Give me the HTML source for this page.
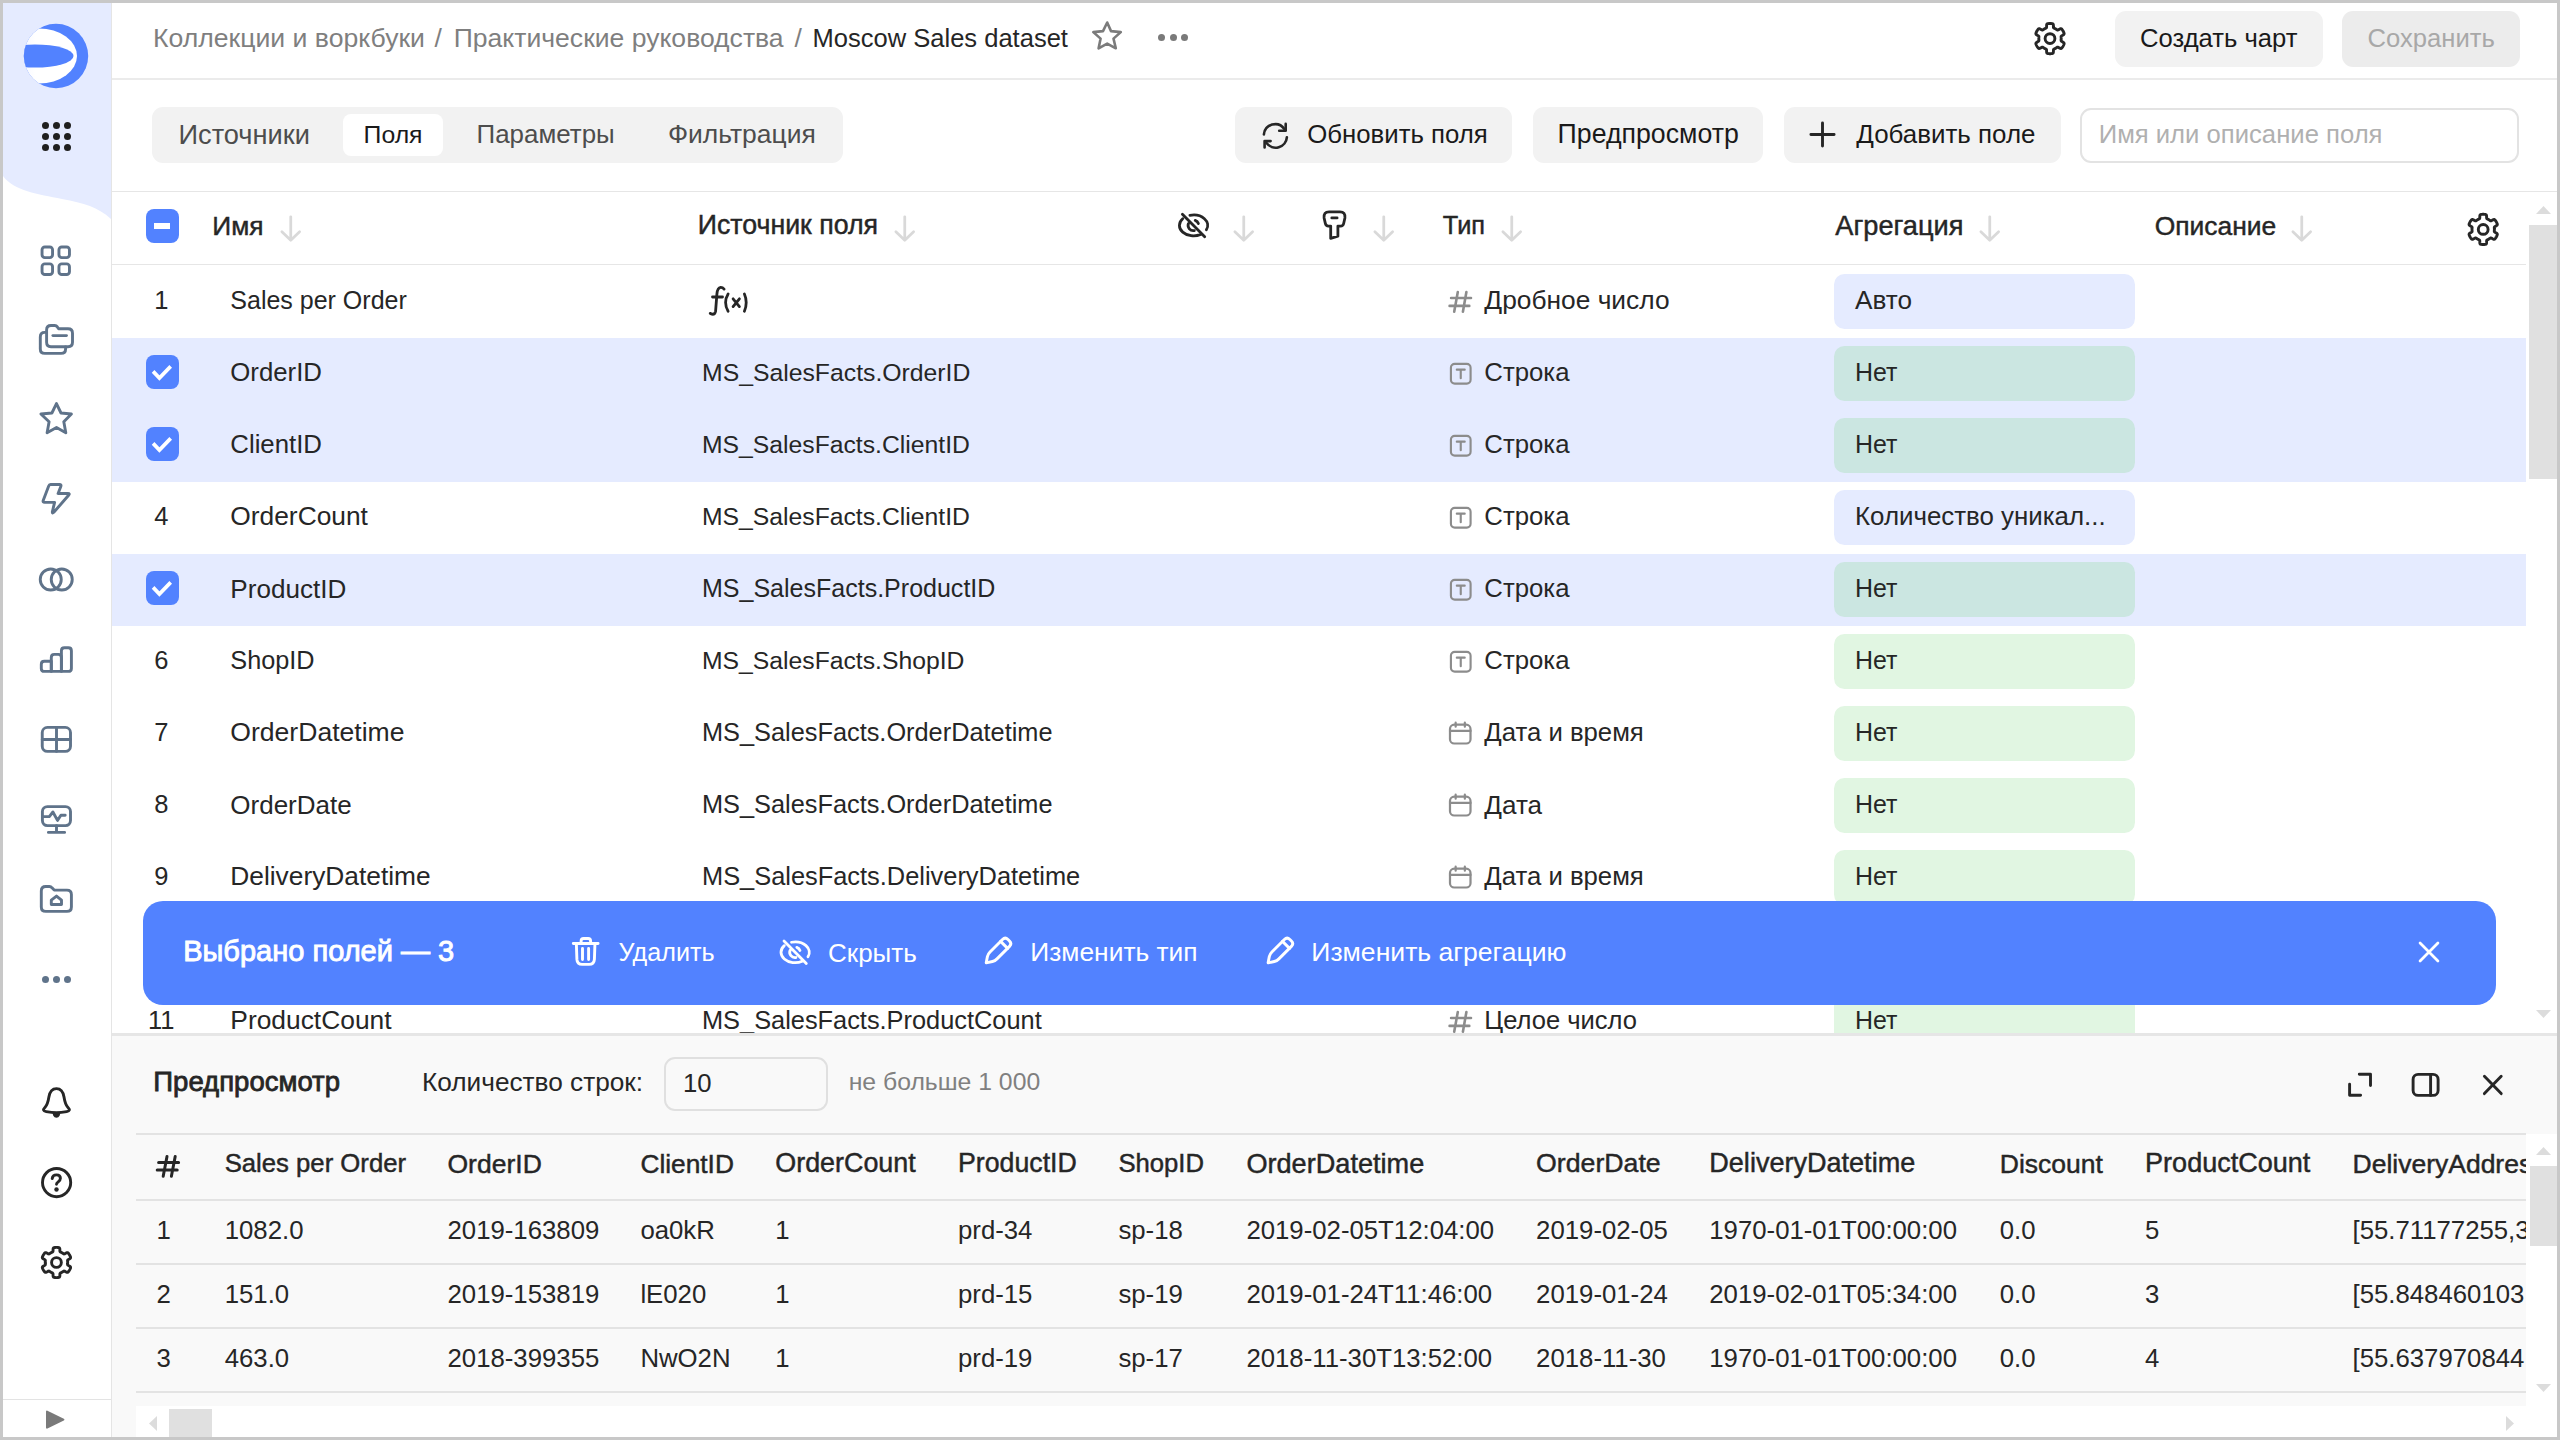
<!DOCTYPE html>
<html><head><meta charset="utf-8"><title>Moscow Sales dataset</title>
<style>
html,body{margin:0;padding:0}
body{width:2560px;height:1440px;position:relative;overflow:hidden;background:#c8c8c8;font-family:"Liberation Sans",sans-serif}
.t{position:absolute;white-space:nowrap;line-height:1;font-family:"Liberation Sans",sans-serif}
.r{position:absolute;box-sizing:border-box}
.s{position:absolute;overflow:visible}
</style></head><body>
<div class="r" style="left:3px;top:3px;width:2554px;height:1434px;background:#fff"></div>

<svg class="s" style="left:0.00px;top:0.00px;width:112.00px;height:230.00px;" viewBox="0 0 112 230"><path d="M3 3H111V219C98 207 84 203 62 199C38 194 14 191 3 176Z" fill="#e5ebff"/></svg>
<div class="r" style="left:110.60px;top:3.00px;width:1.40px;height:1434.00px;background:rgba(0,0,0,0.1);border-radius:0.00px;"></div>
<svg class="s" style="left:0;top:0;width:112px;height:112px" viewBox="0 0 112 112">
<defs>
<clipPath id="lc"><circle cx="56" cy="56" r="32.2"/></clipPath>
<linearGradient id="lg" x1="0" y1="0" x2="1" y2="0">
<stop offset="0" stop-color="#e5ebff"/><stop offset="0.45" stop-color="#ffffff"/><stop offset="1" stop-color="#ffffff"/>
</linearGradient>
</defs>
<g clip-path="url(#lc)">
<rect x="20" y="20" width="72" height="72" fill="#5282ff"/>
<ellipse cx="39" cy="56" rx="38" ry="27.6" fill="url(#lg)"/>
<ellipse cx="35" cy="56" rx="38.5" ry="11.6" fill="#5282ff"/>
</g>
</svg>
<div class="r" style="left:41.60px;top:121.50px;width:7.2px;height:7.2px;border-radius:50%;background:#1f1f1f"></div>
<div class="r" style="left:52.80px;top:121.50px;width:7.2px;height:7.2px;border-radius:50%;background:#1f1f1f"></div>
<div class="r" style="left:64.00px;top:121.50px;width:7.2px;height:7.2px;border-radius:50%;background:#1f1f1f"></div>
<div class="r" style="left:41.60px;top:132.80px;width:7.2px;height:7.2px;border-radius:50%;background:#1f1f1f"></div>
<div class="r" style="left:52.80px;top:132.80px;width:7.2px;height:7.2px;border-radius:50%;background:#1f1f1f"></div>
<div class="r" style="left:64.00px;top:132.80px;width:7.2px;height:7.2px;border-radius:50%;background:#1f1f1f"></div>
<div class="r" style="left:41.60px;top:144.10px;width:7.2px;height:7.2px;border-radius:50%;background:#1f1f1f"></div>
<div class="r" style="left:52.80px;top:144.10px;width:7.2px;height:7.2px;border-radius:50%;background:#1f1f1f"></div>
<div class="r" style="left:64.00px;top:144.10px;width:7.2px;height:7.2px;border-radius:50%;background:#1f1f1f"></div>
<svg class="s" style="left:0;top:0;width:2560px;height:1440px" viewBox="0 0 2560 1440"><rect x="42.05" y="246.95" width="10.5" height="10.7" rx="2.8" fill="none" stroke="#5f738a" stroke-width="2.9" stroke-linecap="round" stroke-linejoin="round"/><rect x="58.95" y="246.95" width="10.5" height="10.7" rx="2.8" fill="none" stroke="#5f738a" stroke-width="2.9" stroke-linecap="round" stroke-linejoin="round"/><rect x="42.05" y="263.85" width="10.5" height="10.7" rx="2.8" fill="none" stroke="#5f738a" stroke-width="2.9" stroke-linecap="round" stroke-linejoin="round"/><rect x="58.95" y="263.85" width="10.5" height="10.7" rx="2.8" fill="none" stroke="#5f738a" stroke-width="2.9" stroke-linecap="round" stroke-linejoin="round"/><path d="M46.6 342.2V330Q46.6 325.5 51 325.5H54.8Q56.4 325.5 57.3 326.9L58.6 328.8H68Q72.5 328.8 72.5 333.3V342.2Q72.5 346.7 68 346.7H51Q46.6 346.7 46.6 342.2Z" fill="none" stroke="#5f738a" stroke-width="2.9" stroke-linecap="round" stroke-linejoin="round"/><path d="M52.9 335.6H66.5" fill="none" stroke="#5f738a" stroke-width="2.9" stroke-linecap="round" stroke-linejoin="round"/><path d="M46.6 332.4H44.8Q40.3 332.4 40.3 336.9V348.9Q40.3 353.4 44.8 353.4H61.1Q65.6 353.4 65.6 348.9V346.9" fill="none" stroke="#5f738a" stroke-width="2.9" stroke-linecap="round" stroke-linejoin="round"/><path d="M56.46 403.6L61 413L71.4 414L63.8 421.7L65.8 432.7L56.5 427.5L47.1 432.7L49.1 421.7L40.9 414L51.9 413Z" fill="none" stroke="#5f738a" stroke-width="2.9" stroke-linecap="round" stroke-linejoin="round"/><path d="M50.5 484.5H59.6Q61.4 484.5 60.9 486.2L58.1 493.5H67.9Q70.3 493.5 68.6 495.3L53.8 512.3Q52 514 52.4 511.6L54.6 502.4H44.6Q42.6 502.4 43.2 500.5L48.6 486.2Q49.2 484.5 50.5 484.5Z" fill="none" stroke="#5f738a" stroke-width="2.9" stroke-linecap="round" stroke-linejoin="round"/><circle cx="50.75" cy="579.5" r="10.5" fill="none" stroke="#5f738a" stroke-width="2.9" stroke-linecap="round" stroke-linejoin="round"/><circle cx="61.75" cy="579.5" r="10.5" fill="none" stroke="#5f738a" stroke-width="2.9" stroke-linecap="round" stroke-linejoin="round"/><path d="M44.3 661.3H51.3V671.4H44.3Q41.3 671.4 41.3 668.4V664.3Q41.3 661.3 44.3 661.3Z" fill="none" stroke="#5f738a" stroke-width="2.9" stroke-linecap="round" stroke-linejoin="round"/><path d="M54.3 654.4H58.4Q61.4 654.4 61.4 657.4V671.4H51.3V657.4Q51.3 654.4 54.3 654.4Z" fill="none" stroke="#5f738a" stroke-width="2.9" stroke-linecap="round" stroke-linejoin="round"/><path d="M64.4 647.7H68.4Q71.4 647.7 71.4 650.7V668.4Q71.4 671.4 68.4 671.4H61.4V650.7Q61.4 647.7 64.4 647.7Z" fill="none" stroke="#5f738a" stroke-width="2.9" stroke-linecap="round" stroke-linejoin="round"/><rect x="42.25" y="727.4" width="28.25" height="24" rx="5.2" fill="none" stroke="#5f738a" stroke-width="2.9" stroke-linecap="round" stroke-linejoin="round"/><path d="M56.5 727.4V751.4M42.25 739.5H70.5" fill="none" stroke="#5f738a" stroke-width="2.9" stroke-linecap="round" stroke-linejoin="round"/><rect x="42.4" y="806.6" width="28.1" height="19" rx="5" fill="none" stroke="#5f738a" stroke-width="2.9" stroke-linecap="round" stroke-linejoin="round"/><path d="M43.2 816.6H49.3L52.9 812L57.5 820.4L60.9 815.3H65.2" fill="none" stroke="#5f738a" stroke-width="2.9" stroke-linecap="round" stroke-linejoin="round"/><path d="M56.5 825.6V832.4M48.4 832.4H64.6" fill="none" stroke="#5f738a" stroke-width="2.9" stroke-linecap="round" stroke-linejoin="round"/><path d="M41.3 907V891Q41.3 886.5 45.8 886.5H49.4Q51 886.5 52 887.8L54.2 890.1H66.9Q71.4 890.1 71.4 894.6V907Q71.4 911.4 66.9 911.4H45.8Q41.3 911.4 41.3 907Z" fill="none" stroke="#5f738a" stroke-width="2.9" stroke-linecap="round" stroke-linejoin="round"/><path d="M56.5 896.1L61.5 900.2V904.5H51.3V900.2Z" fill="none" stroke="#5f738a" stroke-width="2.9" stroke-linecap="round" stroke-linejoin="round"/></svg>
<div class="r" style="left:41.70px;top:975.80px;width:7px;height:7px;border-radius:50%;background:#5f738a"></div>
<div class="r" style="left:52.80px;top:975.80px;width:7px;height:7px;border-radius:50%;background:#5f738a"></div>
<div class="r" style="left:63.90px;top:975.80px;width:7px;height:7px;border-radius:50%;background:#5f738a"></div>
<svg class="s" style="left:0;top:0;width:2560px;height:1440px" viewBox="0 0 2560 1440"><path d="M56.46 1088.6C51.2 1088.6 49.6 1092.6 48.9 1097C48.1 1102 47.6 1104.6 45.1 1107.2C42.6 1109.8 43.2 1111.1 46.2 1111.6C50.1 1112.3 53.1 1112.6 56.46 1112.6C59.8 1112.6 62.8 1112.3 66.7 1111.6C69.7 1111.1 70.3 1109.8 67.8 1107.2C65.3 1104.6 64.8 1102 64 1097C63.3 1092.6 61.7 1088.6 56.46 1088.6Z" fill="none" stroke="#262626" stroke-width="2.9" stroke-linecap="round" stroke-linejoin="round"/><path d="M52.3 1112.6H60.6L59.6 1115.8Q58.6 1117.8 56.46 1117.8Q54.3 1117.8 53.3 1115.8Z" fill="#262626"/><circle cx="56.6" cy="1182.6" r="14.1" fill="none" stroke="#262626" stroke-width="2.9" stroke-linecap="round" stroke-linejoin="round"/><path d="M52.2 1178.6Q52.6 1174.9 56.5 1174.9Q60.4 1174.9 60.4 1178.3Q60.4 1180.5 58.1 1181.9Q56.5 1182.9 56.5 1184.3" fill="none" stroke="#262626" stroke-width="2.9" stroke-linecap="round" stroke-linejoin="round"/><circle cx="56.5" cy="1189.5" r="2.2" fill="#262626"/><path d="M67.66 1262.50 L67.66 1262.70 L67.65 1262.89 L67.65 1263.09 L67.63 1263.28 L67.62 1263.48 L67.60 1263.67 L67.59 1263.87 L67.57 1264.06 L67.56 1264.26 L67.56 1264.46 L67.60 1264.66 L67.71 1264.89 L67.98 1265.16 L68.47 1265.49 L69.16 1265.90 L69.84 1266.34 L70.31 1266.73 L70.53 1267.07 L70.60 1267.37 L70.58 1267.64 L70.53 1267.90 L70.44 1268.15 L70.35 1268.40 L70.25 1268.64 L70.14 1268.88 L70.03 1269.12 L69.91 1269.35 L69.79 1269.59 L69.67 1269.82 L69.54 1270.05 L69.40 1270.28 L69.27 1270.50 L69.12 1270.72 L68.98 1270.94 L68.83 1271.16 L68.67 1271.37 L68.51 1271.58 L68.35 1271.79 L68.17 1271.98 L67.97 1272.16 L67.75 1272.31 L67.46 1272.40 L67.05 1272.38 L66.47 1272.17 L65.76 1271.80 L65.06 1271.40 L64.52 1271.14 L64.16 1271.05 L63.90 1271.06 L63.70 1271.13 L63.53 1271.23 L63.37 1271.34 L63.21 1271.45 L63.05 1271.56 L62.89 1271.68 L62.72 1271.79 L62.56 1271.89 L62.40 1272.00 L62.23 1272.10 L62.06 1272.20 L61.89 1272.30 L61.72 1272.39 L61.54 1272.48 L61.37 1272.57 L61.19 1272.65 L61.02 1272.74 L60.84 1272.82 L60.66 1272.90 L60.49 1272.99 L60.31 1273.09 L60.15 1273.23 L60.01 1273.44 L59.92 1273.80 L59.87 1274.40 L59.86 1275.20 L59.83 1276.01 L59.72 1276.61 L59.54 1276.97 L59.31 1277.18 L59.07 1277.30 L58.82 1277.38 L58.56 1277.44 L58.30 1277.48 L58.04 1277.51 L57.78 1277.54 L57.51 1277.56 L57.25 1277.58 L56.99 1277.59 L56.72 1277.60 L56.46 1277.60 L56.20 1277.60 L55.93 1277.59 L55.67 1277.58 L55.41 1277.56 L55.14 1277.54 L54.88 1277.51 L54.62 1277.48 L54.36 1277.44 L54.10 1277.38 L53.85 1277.30 L53.61 1277.18 L53.38 1276.97 L53.20 1276.61 L53.09 1276.01 L53.06 1275.20 L53.05 1274.40 L53.00 1273.80 L52.91 1273.44 L52.77 1273.23 L52.61 1273.09 L52.43 1272.99 L52.26 1272.90 L52.08 1272.82 L51.90 1272.74 L51.73 1272.65 L51.55 1272.57 L51.38 1272.48 L51.20 1272.39 L51.03 1272.30 L50.86 1272.20 L50.69 1272.10 L50.52 1272.00 L50.36 1271.89 L50.20 1271.79 L50.03 1271.68 L49.87 1271.56 L49.71 1271.45 L49.55 1271.34 L49.39 1271.23 L49.22 1271.13 L49.02 1271.06 L48.76 1271.05 L48.40 1271.14 L47.86 1271.40 L47.16 1271.80 L46.45 1272.17 L45.87 1272.38 L45.46 1272.40 L45.17 1272.31 L44.95 1272.16 L44.75 1271.98 L44.57 1271.79 L44.41 1271.58 L44.25 1271.37 L44.09 1271.16 L43.94 1270.94 L43.80 1270.72 L43.65 1270.50 L43.52 1270.28 L43.38 1270.05 L43.25 1269.82 L43.13 1269.59 L43.01 1269.35 L42.89 1269.12 L42.78 1268.88 L42.67 1268.64 L42.57 1268.40 L42.48 1268.15 L42.39 1267.90 L42.34 1267.64 L42.32 1267.37 L42.39 1267.07 L42.61 1266.73 L43.08 1266.34 L43.76 1265.90 L44.45 1265.49 L44.94 1265.16 L45.21 1264.89 L45.32 1264.66 L45.36 1264.46 L45.36 1264.26 L45.35 1264.06 L45.33 1263.87 L45.32 1263.67 L45.30 1263.48 L45.29 1263.28 L45.27 1263.09 L45.27 1262.89 L45.26 1262.70 L45.26 1262.50 L45.26 1262.30 L45.27 1262.11 L45.27 1261.91 L45.29 1261.72 L45.30 1261.52 L45.32 1261.33 L45.33 1261.13 L45.35 1260.94 L45.36 1260.74 L45.36 1260.54 L45.32 1260.34 L45.21 1260.11 L44.94 1259.84 L44.45 1259.51 L43.76 1259.10 L43.08 1258.66 L42.61 1258.27 L42.39 1257.93 L42.32 1257.63 L42.34 1257.36 L42.39 1257.10 L42.48 1256.85 L42.57 1256.60 L42.67 1256.36 L42.78 1256.12 L42.89 1255.88 L43.01 1255.65 L43.13 1255.41 L43.25 1255.18 L43.38 1254.95 L43.52 1254.72 L43.65 1254.50 L43.80 1254.28 L43.94 1254.06 L44.09 1253.84 L44.25 1253.63 L44.41 1253.42 L44.57 1253.21 L44.75 1253.02 L44.95 1252.84 L45.17 1252.69 L45.46 1252.60 L45.87 1252.62 L46.45 1252.83 L47.16 1253.20 L47.86 1253.60 L48.40 1253.86 L48.76 1253.95 L49.02 1253.94 L49.22 1253.87 L49.39 1253.77 L49.55 1253.66 L49.71 1253.55 L49.87 1253.44 L50.03 1253.32 L50.20 1253.21 L50.36 1253.11 L50.52 1253.00 L50.69 1252.90 L50.86 1252.80 L51.03 1252.70 L51.20 1252.61 L51.38 1252.52 L51.55 1252.43 L51.73 1252.35 L51.90 1252.26 L52.08 1252.18 L52.26 1252.10 L52.43 1252.01 L52.61 1251.91 L52.77 1251.77 L52.91 1251.56 L53.00 1251.20 L53.05 1250.60 L53.06 1249.80 L53.09 1248.99 L53.20 1248.39 L53.38 1248.03 L53.61 1247.82 L53.85 1247.70 L54.10 1247.62 L54.36 1247.56 L54.62 1247.52 L54.88 1247.49 L55.14 1247.46 L55.41 1247.44 L55.67 1247.42 L55.93 1247.41 L56.20 1247.40 L56.46 1247.40 L56.72 1247.40 L56.99 1247.41 L57.25 1247.42 L57.51 1247.44 L57.78 1247.46 L58.04 1247.49 L58.30 1247.52 L58.56 1247.56 L58.82 1247.62 L59.07 1247.70 L59.31 1247.82 L59.54 1248.03 L59.72 1248.39 L59.83 1248.99 L59.86 1249.80 L59.87 1250.60 L59.92 1251.20 L60.01 1251.56 L60.15 1251.77 L60.31 1251.91 L60.49 1252.01 L60.66 1252.10 L60.84 1252.18 L61.02 1252.26 L61.19 1252.35 L61.37 1252.43 L61.54 1252.52 L61.72 1252.61 L61.89 1252.70 L62.06 1252.80 L62.23 1252.90 L62.40 1253.00 L62.56 1253.11 L62.72 1253.21 L62.89 1253.32 L63.05 1253.44 L63.21 1253.55 L63.37 1253.66 L63.53 1253.77 L63.70 1253.87 L63.90 1253.94 L64.16 1253.95 L64.52 1253.86 L65.06 1253.60 L65.76 1253.20 L66.47 1252.83 L67.05 1252.62 L67.46 1252.60 L67.75 1252.69 L67.97 1252.84 L68.17 1253.02 L68.35 1253.21 L68.51 1253.42 L68.67 1253.63 L68.83 1253.84 L68.98 1254.06 L69.12 1254.28 L69.27 1254.50 L69.40 1254.72 L69.54 1254.95 L69.67 1255.18 L69.79 1255.41 L69.91 1255.65 L70.03 1255.88 L70.14 1256.12 L70.25 1256.36 L70.35 1256.60 L70.44 1256.85 L70.53 1257.10 L70.58 1257.36 L70.60 1257.63 L70.53 1257.93 L70.31 1258.27 L69.84 1258.66 L69.16 1259.10 L68.47 1259.51 L67.98 1259.84 L67.71 1260.11 L67.60 1260.34 L67.56 1260.54 L67.56 1260.74 L67.57 1260.94 L67.59 1261.13 L67.60 1261.33 L67.62 1261.52 L67.63 1261.72 L67.65 1261.91 L67.65 1262.11 L67.66 1262.30Z" fill="none" stroke="#262626" stroke-width="2.90" stroke-linejoin="round"/><circle cx="56.46" cy="1262.50" r="4.90" fill="none" stroke="#262626" stroke-width="2.90"/></svg>
<div class="r" style="left:3.00px;top:1398.60px;width:107.60px;height:1.40px;background:#e3e3e3;border-radius:0.00px;"></div>
<svg class="s" style="left:0;top:0;width:2560px;height:1440px" viewBox="0 0 2560 1440"><path d="M47 1411.6L63.4 1419.6L47 1427.6Z" fill="#7a7a7a" stroke="#7a7a7a" stroke-width="2" stroke-linejoin="round"/></svg>
<div class="r" style="left:112.00px;top:78.00px;width:2445.00px;height:2.00px;background:#ebebeb;border-radius:0.00px;"></div>
<div class="t" style="left:153.00px;top:24.66px;font-size:26.61px;color:#7f7f7f">Коллекции и воркбуки</div>
<div class="t" style="left:434.50px;top:24.76px;font-size:26.50px;color:#7f7f7f">/</div>
<div class="t" style="left:453.75px;top:24.72px;font-size:26.55px;color:#7f7f7f">Практические руководства</div>
<div class="t" style="left:794.50px;top:24.76px;font-size:26.50px;color:#7f7f7f">/</div>
<div class="t" style="left:812.50px;top:25.58px;font-size:25.54px;color:#262626">Moscow Sales dataset</div>
<svg class="s" style="left:0;top:0;width:2560px;height:1440px" viewBox="0 0 2560 1440"><path d="M1107.2 22.5L1111 31.1L1120.8 32.1L1113.5 38.6L1115.8 48.3L1107.2 43.6L1098.6 48.3L1100.6 38.6L1093.3 32.1L1103 31.1Z" fill="none" stroke="#7b7b7b" stroke-width="2.6" stroke-linejoin="round"/></svg>
<div class="r" style="left:1158.00px;top:33.50px;width:7px;height:7px;border-radius:50%;background:#7a7a7a"></div>
<div class="r" style="left:1169.50px;top:33.50px;width:7px;height:7px;border-radius:50%;background:#7a7a7a"></div>
<div class="r" style="left:1181.00px;top:33.50px;width:7px;height:7px;border-radius:50%;background:#7a7a7a"></div>
<svg class="s" style="left:0;top:0;width:2560px;height:1440px" viewBox="0 0 2560 1440"><path d="M2061.20 38.60 L2061.20 38.80 L2061.19 38.99 L2061.19 39.19 L2061.17 39.38 L2061.16 39.58 L2061.14 39.77 L2061.13 39.97 L2061.11 40.16 L2061.10 40.36 L2061.10 40.56 L2061.14 40.76 L2061.25 40.99 L2061.52 41.26 L2062.01 41.59 L2062.70 42.00 L2063.38 42.44 L2063.85 42.83 L2064.07 43.17 L2064.14 43.47 L2064.12 43.74 L2064.07 44.00 L2063.98 44.25 L2063.89 44.50 L2063.79 44.74 L2063.68 44.98 L2063.57 45.22 L2063.45 45.45 L2063.33 45.69 L2063.21 45.92 L2063.08 46.15 L2062.94 46.38 L2062.81 46.60 L2062.66 46.82 L2062.52 47.04 L2062.37 47.26 L2062.21 47.47 L2062.05 47.68 L2061.89 47.89 L2061.71 48.08 L2061.51 48.26 L2061.29 48.41 L2061.00 48.50 L2060.59 48.48 L2060.01 48.27 L2059.30 47.90 L2058.60 47.50 L2058.06 47.24 L2057.70 47.15 L2057.44 47.16 L2057.24 47.23 L2057.07 47.33 L2056.91 47.44 L2056.75 47.55 L2056.59 47.66 L2056.43 47.78 L2056.26 47.89 L2056.10 47.99 L2055.94 48.10 L2055.77 48.20 L2055.60 48.30 L2055.43 48.40 L2055.26 48.49 L2055.08 48.58 L2054.91 48.67 L2054.73 48.75 L2054.56 48.84 L2054.38 48.92 L2054.20 49.00 L2054.03 49.09 L2053.85 49.19 L2053.69 49.33 L2053.55 49.54 L2053.46 49.90 L2053.41 50.50 L2053.40 51.30 L2053.37 52.11 L2053.26 52.71 L2053.08 53.07 L2052.85 53.28 L2052.61 53.40 L2052.36 53.48 L2052.10 53.54 L2051.84 53.58 L2051.58 53.61 L2051.32 53.64 L2051.05 53.66 L2050.79 53.68 L2050.53 53.69 L2050.26 53.70 L2050.00 53.70 L2049.74 53.70 L2049.47 53.69 L2049.21 53.68 L2048.95 53.66 L2048.68 53.64 L2048.42 53.61 L2048.16 53.58 L2047.90 53.54 L2047.64 53.48 L2047.39 53.40 L2047.15 53.28 L2046.92 53.07 L2046.74 52.71 L2046.63 52.11 L2046.60 51.30 L2046.59 50.50 L2046.54 49.90 L2046.45 49.54 L2046.31 49.33 L2046.15 49.19 L2045.97 49.09 L2045.80 49.00 L2045.62 48.92 L2045.44 48.84 L2045.27 48.75 L2045.09 48.67 L2044.92 48.58 L2044.74 48.49 L2044.57 48.40 L2044.40 48.30 L2044.23 48.20 L2044.06 48.10 L2043.90 47.99 L2043.74 47.89 L2043.57 47.78 L2043.41 47.66 L2043.25 47.55 L2043.09 47.44 L2042.93 47.33 L2042.76 47.23 L2042.56 47.16 L2042.30 47.15 L2041.94 47.24 L2041.40 47.50 L2040.70 47.90 L2039.99 48.27 L2039.41 48.48 L2039.00 48.50 L2038.71 48.41 L2038.49 48.26 L2038.29 48.08 L2038.11 47.89 L2037.95 47.68 L2037.79 47.47 L2037.63 47.26 L2037.48 47.04 L2037.34 46.82 L2037.19 46.60 L2037.06 46.38 L2036.92 46.15 L2036.79 45.92 L2036.67 45.69 L2036.55 45.45 L2036.43 45.22 L2036.32 44.98 L2036.21 44.74 L2036.11 44.50 L2036.02 44.25 L2035.93 44.00 L2035.88 43.74 L2035.86 43.47 L2035.93 43.17 L2036.15 42.83 L2036.62 42.44 L2037.30 42.00 L2037.99 41.59 L2038.48 41.26 L2038.75 40.99 L2038.86 40.76 L2038.90 40.56 L2038.90 40.36 L2038.89 40.16 L2038.87 39.97 L2038.86 39.77 L2038.84 39.58 L2038.83 39.38 L2038.81 39.19 L2038.81 38.99 L2038.80 38.80 L2038.80 38.60 L2038.80 38.40 L2038.81 38.21 L2038.81 38.01 L2038.83 37.82 L2038.84 37.62 L2038.86 37.43 L2038.87 37.23 L2038.89 37.04 L2038.90 36.84 L2038.90 36.64 L2038.86 36.44 L2038.75 36.21 L2038.48 35.94 L2037.99 35.61 L2037.30 35.20 L2036.62 34.76 L2036.15 34.37 L2035.93 34.03 L2035.86 33.73 L2035.88 33.46 L2035.93 33.20 L2036.02 32.95 L2036.11 32.70 L2036.21 32.46 L2036.32 32.22 L2036.43 31.98 L2036.55 31.75 L2036.67 31.51 L2036.79 31.28 L2036.92 31.05 L2037.06 30.82 L2037.19 30.60 L2037.34 30.38 L2037.48 30.16 L2037.63 29.94 L2037.79 29.73 L2037.95 29.52 L2038.11 29.31 L2038.29 29.12 L2038.49 28.94 L2038.71 28.79 L2039.00 28.70 L2039.41 28.72 L2039.99 28.93 L2040.70 29.30 L2041.40 29.70 L2041.94 29.96 L2042.30 30.05 L2042.56 30.04 L2042.76 29.97 L2042.93 29.87 L2043.09 29.76 L2043.25 29.65 L2043.41 29.54 L2043.57 29.42 L2043.74 29.31 L2043.90 29.21 L2044.06 29.10 L2044.23 29.00 L2044.40 28.90 L2044.57 28.80 L2044.74 28.71 L2044.92 28.62 L2045.09 28.53 L2045.27 28.45 L2045.44 28.36 L2045.62 28.28 L2045.80 28.20 L2045.97 28.11 L2046.15 28.01 L2046.31 27.87 L2046.45 27.66 L2046.54 27.30 L2046.59 26.70 L2046.60 25.90 L2046.63 25.09 L2046.74 24.49 L2046.92 24.13 L2047.15 23.92 L2047.39 23.80 L2047.64 23.72 L2047.90 23.66 L2048.16 23.62 L2048.42 23.59 L2048.68 23.56 L2048.95 23.54 L2049.21 23.52 L2049.47 23.51 L2049.74 23.50 L2050.00 23.50 L2050.26 23.50 L2050.53 23.51 L2050.79 23.52 L2051.05 23.54 L2051.32 23.56 L2051.58 23.59 L2051.84 23.62 L2052.10 23.66 L2052.36 23.72 L2052.61 23.80 L2052.85 23.92 L2053.08 24.13 L2053.26 24.49 L2053.37 25.09 L2053.40 25.90 L2053.41 26.70 L2053.46 27.30 L2053.55 27.66 L2053.69 27.87 L2053.85 28.01 L2054.03 28.11 L2054.20 28.20 L2054.38 28.28 L2054.56 28.36 L2054.73 28.45 L2054.91 28.53 L2055.08 28.62 L2055.26 28.71 L2055.43 28.80 L2055.60 28.90 L2055.77 29.00 L2055.94 29.10 L2056.10 29.21 L2056.26 29.31 L2056.43 29.42 L2056.59 29.54 L2056.75 29.65 L2056.91 29.76 L2057.07 29.87 L2057.24 29.97 L2057.44 30.04 L2057.70 30.05 L2058.06 29.96 L2058.60 29.70 L2059.30 29.30 L2060.01 28.93 L2060.59 28.72 L2061.00 28.70 L2061.29 28.79 L2061.51 28.94 L2061.71 29.12 L2061.89 29.31 L2062.05 29.52 L2062.21 29.73 L2062.37 29.94 L2062.52 30.16 L2062.66 30.38 L2062.81 30.60 L2062.94 30.82 L2063.08 31.05 L2063.21 31.28 L2063.33 31.51 L2063.45 31.75 L2063.57 31.98 L2063.68 32.22 L2063.79 32.46 L2063.89 32.70 L2063.98 32.95 L2064.07 33.20 L2064.12 33.46 L2064.14 33.73 L2064.07 34.03 L2063.85 34.37 L2063.38 34.76 L2062.70 35.20 L2062.01 35.61 L2061.52 35.94 L2061.25 36.21 L2061.14 36.44 L2061.10 36.64 L2061.10 36.84 L2061.11 37.04 L2061.13 37.23 L2061.14 37.43 L2061.16 37.62 L2061.17 37.82 L2061.19 38.01 L2061.19 38.21 L2061.20 38.40Z" fill="none" stroke="#262626" stroke-width="2.90" stroke-linejoin="round"/><circle cx="2050.00" cy="38.60" r="4.90" fill="none" stroke="#262626" stroke-width="2.90"/></svg>
<div class="r" style="left:2115.30px;top:10.90px;width:207.70px;height:55.80px;background:#f2f2f2;border-radius:11.00px;"></div>
<div class="t" style="left:2140.00px;top:26.41px;font-size:25.61px;color:#1a1a1a">Создать чарт</div>
<div class="r" style="left:2342.40px;top:10.90px;width:177.20px;height:55.80px;background:#ececec;border-radius:11.00px;"></div>
<div class="t" style="left:2367.50px;top:26.39px;font-size:25.63px;color:#a8a8a8">Сохранить</div>
<div class="r" style="left:151.80px;top:107.00px;width:691.20px;height:56.00px;background:#f2f2f2;border-radius:11.00px;"></div>
<div class="r" style="left:342.50px;top:113.80px;width:100.70px;height:42.50px;background:#ffffff;border-radius:8.00px;"></div>
<div class="t" style="left:178.50px;top:120.75px;font-size:27.23px;color:#4d4d4d">Источники</div>
<div class="t" style="left:363.60px;top:122.81px;font-size:24.79px;color:#1a1a1a">Поля</div>
<div class="t" style="left:476.60px;top:121.86px;font-size:25.91px;color:#4d4d4d">Параметры</div>
<div class="t" style="left:668.00px;top:121.41px;font-size:26.44px;color:#4d4d4d">Фильтрация</div>
<div class="r" style="left:1235.20px;top:107.00px;width:276.60px;height:56.00px;background:#f2f2f2;border-radius:11.00px;"></div>
<svg class="s" style="left:0;top:0;width:2560px;height:1440px" viewBox="0 0 2560 1440"><g fill="none" stroke="#262626" stroke-width="2.6" stroke-linecap="round" stroke-linejoin="round"><path d="M1263.9 134.4A11.3 11.3 0 0 1 1284.3 128.9"/><path d="M1285.7 123.9V130.7H1279.2"/><path d="M1286.9 137.2A11.3 11.3 0 0 1 1266.5 143.1"/><path d="M1264.6 147.5V141.1H1270.6"/></g></svg>
<div class="t" style="left:1307.20px;top:121.97px;font-size:25.78px;color:#1a1a1a">Обновить поля</div>
<div class="r" style="left:1532.60px;top:107.00px;width:230.70px;height:56.00px;background:#f2f2f2;border-radius:11.00px;"></div>
<div class="t" style="left:1557.60px;top:121.17px;font-size:26.73px;color:#1a1a1a">Предпросмотр</div>
<div class="r" style="left:1784.00px;top:107.00px;width:276.50px;height:56.00px;background:#f2f2f2;border-radius:11.00px;"></div>
<svg class="s" style="left:1808.10px;top:120.30px;width:29.00px;height:29.00px;" viewBox="0 0 16 16"><path d="M8 1.6v12.8M1.6 8h12.8" fill="none" stroke="#262626" stroke-width="1.6" stroke-linecap="round"/></svg>
<div class="t" style="left:1856.30px;top:121.84px;font-size:25.93px;color:#1a1a1a">Добавить поле</div>
<div class="r" style="left:2080.40px;top:107.60px;width:439.10px;height:55.10px;background:#ffffff;border-radius:11.00px;border:2px solid #e3e3e3"></div>
<div class="t" style="left:2098.70px;top:122.06px;font-size:25.67px;color:#b0b0b0">Имя или описание поля</div>
<div class="r" style="left:112.00px;top:190.50px;width:2445.00px;height:1.80px;background:#e6e6e6;border-radius:0.00px;"></div>
<div class="r" style="left:112.00px;top:263.80px;width:2414.00px;height:1.70px;background:#e6e6e6;border-radius:0.00px;"></div>
<div class="r" style="left:145.60px;top:209.40px;width:33.40px;height:33.60px;background:#5282ff;border-radius:8.00px;"></div>
<div class="r" style="left:154.10px;top:223.30px;width:16.30px;height:5.70px;background:#fff;border-radius:0.00px;"></div>
<div class="t" style="left:212.30px;top:212.62px;font-size:26.31px;color:#262626;-webkit-text-stroke:0.45px #262626">Имя</div>
<svg class="s" style="left:276.05px;top:213.95px;width:29.50px;height:29.50px;" viewBox="0 0 16 16"><path d="M8 1.5v12.5M3.2 9.6L8 14.2l4.8-4.6" fill="none" stroke="#d9d9d9" stroke-width="1.5" stroke-linecap="round" stroke-linejoin="round"/></svg>
<div class="t" style="left:697.70px;top:212.26px;font-size:26.74px;color:#262626;-webkit-text-stroke:0.45px #262626">Источник поля</div>
<svg class="s" style="left:890.25px;top:213.95px;width:29.50px;height:29.50px;" viewBox="0 0 16 16"><path d="M8 1.5v12.5M3.2 9.6L8 14.2l4.8-4.6" fill="none" stroke="#d9d9d9" stroke-width="1.5" stroke-linecap="round" stroke-linejoin="round"/></svg>
<svg class="s" style="left:0;top:0;width:2560px;height:1440px" viewBox="0 0 2560 1440"><path d="M1182.71 218.72A14.15 10.40 0 0 0 1200.62 234.41M1189.89 215.35A14.15 10.40 0 0 1 1206.37 229.80M1188.42 223.59A5.30 5.30 0 0 0 1194.32 230.62M1195.21 220.42A5.30 5.30 0 0 1 1198.38 223.59M1182.40 214.20L1204.70 236.70" fill="none" stroke="#262626" stroke-width="2.80" stroke-linecap="round"/></svg>
<svg class="s" style="left:1228.55px;top:213.95px;width:29.50px;height:29.50px;" viewBox="0 0 16 16"><path d="M8 1.5v12.5M3.2 9.6L8 14.2l4.8-4.6" fill="none" stroke="#d9d9d9" stroke-width="1.5" stroke-linecap="round" stroke-linejoin="round"/></svg>
<svg class="s" style="left:0;top:0;width:2560px;height:1440px" viewBox="0 0 2560 1440"><g fill="none" stroke="#262626" stroke-width="2.8" stroke-linecap="round" stroke-linejoin="round"><path d="M1330.7 226.1H1328.4Q1326 226.1 1325.4 223.7L1324.1 218Q1323.4 211.9 1329 211.9H1340Q1345.6 211.9 1344.9 218L1343.6 223.7Q1343 226.1 1340.6 226.1H1337.9V236.2L1330.7 238.4Z"/><path d="M1331.8 217.9H1337.1"/></g></svg>
<svg class="s" style="left:1369.05px;top:213.95px;width:29.50px;height:29.50px;" viewBox="0 0 16 16"><path d="M8 1.5v12.5M3.2 9.6L8 14.2l4.8-4.6" fill="none" stroke="#d9d9d9" stroke-width="1.5" stroke-linecap="round" stroke-linejoin="round"/></svg>
<div class="t" style="left:1442.80px;top:213.44px;font-size:25.35px;color:#262626;-webkit-text-stroke:0.45px #262626">Тип</div>
<svg class="s" style="left:1496.75px;top:213.95px;width:29.50px;height:29.50px;" viewBox="0 0 16 16"><path d="M8 1.5v12.5M3.2 9.6L8 14.2l4.8-4.6" fill="none" stroke="#d9d9d9" stroke-width="1.5" stroke-linecap="round" stroke-linejoin="round"/></svg>
<div class="t" style="left:1835.30px;top:211.89px;font-size:27.17px;color:#262626;-webkit-text-stroke:0.45px #262626">Агрегация</div>
<svg class="s" style="left:1975.25px;top:213.95px;width:29.50px;height:29.50px;" viewBox="0 0 16 16"><path d="M8 1.5v12.5M3.2 9.6L8 14.2l4.8-4.6" fill="none" stroke="#d9d9d9" stroke-width="1.5" stroke-linecap="round" stroke-linejoin="round"/></svg>
<div class="t" style="left:2154.70px;top:212.53px;font-size:26.41px;color:#262626;-webkit-text-stroke:0.45px #262626">Описание</div>
<svg class="s" style="left:2287.25px;top:213.95px;width:29.50px;height:29.50px;" viewBox="0 0 16 16"><path d="M8 1.5v12.5M3.2 9.6L8 14.2l4.8-4.6" fill="none" stroke="#d9d9d9" stroke-width="1.5" stroke-linecap="round" stroke-linejoin="round"/></svg>
<svg class="s" style="left:0;top:0;width:2560px;height:1440px" viewBox="0 0 2560 1440"><path d="M2494.40 229.40 L2494.40 229.60 L2494.39 229.79 L2494.39 229.99 L2494.37 230.18 L2494.36 230.38 L2494.34 230.57 L2494.33 230.77 L2494.31 230.96 L2494.30 231.16 L2494.30 231.36 L2494.34 231.56 L2494.45 231.79 L2494.72 232.06 L2495.21 232.39 L2495.90 232.80 L2496.58 233.24 L2497.05 233.63 L2497.27 233.97 L2497.34 234.27 L2497.32 234.54 L2497.27 234.80 L2497.18 235.05 L2497.09 235.30 L2496.99 235.54 L2496.88 235.78 L2496.77 236.02 L2496.65 236.25 L2496.53 236.49 L2496.41 236.72 L2496.28 236.95 L2496.14 237.18 L2496.01 237.40 L2495.86 237.62 L2495.72 237.84 L2495.57 238.06 L2495.41 238.27 L2495.25 238.48 L2495.09 238.69 L2494.91 238.88 L2494.71 239.06 L2494.49 239.21 L2494.20 239.30 L2493.79 239.28 L2493.21 239.07 L2492.50 238.70 L2491.80 238.30 L2491.26 238.04 L2490.90 237.95 L2490.64 237.96 L2490.44 238.03 L2490.27 238.13 L2490.11 238.24 L2489.95 238.35 L2489.79 238.46 L2489.63 238.58 L2489.46 238.69 L2489.30 238.79 L2489.14 238.90 L2488.97 239.00 L2488.80 239.10 L2488.63 239.20 L2488.46 239.29 L2488.28 239.38 L2488.11 239.47 L2487.93 239.55 L2487.76 239.64 L2487.58 239.72 L2487.40 239.80 L2487.23 239.89 L2487.05 239.99 L2486.89 240.13 L2486.75 240.34 L2486.66 240.70 L2486.61 241.30 L2486.60 242.10 L2486.57 242.91 L2486.46 243.51 L2486.28 243.87 L2486.05 244.08 L2485.81 244.20 L2485.56 244.28 L2485.30 244.34 L2485.04 244.38 L2484.78 244.41 L2484.52 244.44 L2484.25 244.46 L2483.99 244.48 L2483.73 244.49 L2483.46 244.50 L2483.20 244.50 L2482.94 244.50 L2482.67 244.49 L2482.41 244.48 L2482.15 244.46 L2481.88 244.44 L2481.62 244.41 L2481.36 244.38 L2481.10 244.34 L2480.84 244.28 L2480.59 244.20 L2480.35 244.08 L2480.12 243.87 L2479.94 243.51 L2479.83 242.91 L2479.80 242.10 L2479.79 241.30 L2479.74 240.70 L2479.65 240.34 L2479.51 240.13 L2479.35 239.99 L2479.17 239.89 L2479.00 239.80 L2478.82 239.72 L2478.64 239.64 L2478.47 239.55 L2478.29 239.47 L2478.12 239.38 L2477.94 239.29 L2477.77 239.20 L2477.60 239.10 L2477.43 239.00 L2477.26 238.90 L2477.10 238.79 L2476.94 238.69 L2476.77 238.58 L2476.61 238.46 L2476.45 238.35 L2476.29 238.24 L2476.13 238.13 L2475.96 238.03 L2475.76 237.96 L2475.50 237.95 L2475.14 238.04 L2474.60 238.30 L2473.90 238.70 L2473.19 239.07 L2472.61 239.28 L2472.20 239.30 L2471.91 239.21 L2471.69 239.06 L2471.49 238.88 L2471.31 238.69 L2471.15 238.48 L2470.99 238.27 L2470.83 238.06 L2470.68 237.84 L2470.54 237.62 L2470.39 237.40 L2470.26 237.18 L2470.12 236.95 L2469.99 236.72 L2469.87 236.49 L2469.75 236.25 L2469.63 236.02 L2469.52 235.78 L2469.41 235.54 L2469.31 235.30 L2469.22 235.05 L2469.13 234.80 L2469.08 234.54 L2469.06 234.27 L2469.13 233.97 L2469.35 233.63 L2469.82 233.24 L2470.50 232.80 L2471.19 232.39 L2471.68 232.06 L2471.95 231.79 L2472.06 231.56 L2472.10 231.36 L2472.10 231.16 L2472.09 230.96 L2472.07 230.77 L2472.06 230.57 L2472.04 230.38 L2472.03 230.18 L2472.01 229.99 L2472.01 229.79 L2472.00 229.60 L2472.00 229.40 L2472.00 229.20 L2472.01 229.01 L2472.01 228.81 L2472.03 228.62 L2472.04 228.42 L2472.06 228.23 L2472.07 228.03 L2472.09 227.84 L2472.10 227.64 L2472.10 227.44 L2472.06 227.24 L2471.95 227.01 L2471.68 226.74 L2471.19 226.41 L2470.50 226.00 L2469.82 225.56 L2469.35 225.17 L2469.13 224.83 L2469.06 224.53 L2469.08 224.26 L2469.13 224.00 L2469.22 223.75 L2469.31 223.50 L2469.41 223.26 L2469.52 223.02 L2469.63 222.78 L2469.75 222.55 L2469.87 222.31 L2469.99 222.08 L2470.12 221.85 L2470.26 221.62 L2470.39 221.40 L2470.54 221.18 L2470.68 220.96 L2470.83 220.74 L2470.99 220.53 L2471.15 220.32 L2471.31 220.11 L2471.49 219.92 L2471.69 219.74 L2471.91 219.59 L2472.20 219.50 L2472.61 219.52 L2473.19 219.73 L2473.90 220.10 L2474.60 220.50 L2475.14 220.76 L2475.50 220.85 L2475.76 220.84 L2475.96 220.77 L2476.13 220.67 L2476.29 220.56 L2476.45 220.45 L2476.61 220.34 L2476.77 220.22 L2476.94 220.11 L2477.10 220.01 L2477.26 219.90 L2477.43 219.80 L2477.60 219.70 L2477.77 219.60 L2477.94 219.51 L2478.12 219.42 L2478.29 219.33 L2478.47 219.25 L2478.64 219.16 L2478.82 219.08 L2479.00 219.00 L2479.17 218.91 L2479.35 218.81 L2479.51 218.67 L2479.65 218.46 L2479.74 218.10 L2479.79 217.50 L2479.80 216.70 L2479.83 215.89 L2479.94 215.29 L2480.12 214.93 L2480.35 214.72 L2480.59 214.60 L2480.84 214.52 L2481.10 214.46 L2481.36 214.42 L2481.62 214.39 L2481.88 214.36 L2482.15 214.34 L2482.41 214.32 L2482.67 214.31 L2482.94 214.30 L2483.20 214.30 L2483.46 214.30 L2483.73 214.31 L2483.99 214.32 L2484.25 214.34 L2484.52 214.36 L2484.78 214.39 L2485.04 214.42 L2485.30 214.46 L2485.56 214.52 L2485.81 214.60 L2486.05 214.72 L2486.28 214.93 L2486.46 215.29 L2486.57 215.89 L2486.60 216.70 L2486.61 217.50 L2486.66 218.10 L2486.75 218.46 L2486.89 218.67 L2487.05 218.81 L2487.23 218.91 L2487.40 219.00 L2487.58 219.08 L2487.76 219.16 L2487.93 219.25 L2488.11 219.33 L2488.28 219.42 L2488.46 219.51 L2488.63 219.60 L2488.80 219.70 L2488.97 219.80 L2489.14 219.90 L2489.30 220.01 L2489.46 220.11 L2489.63 220.22 L2489.79 220.34 L2489.95 220.45 L2490.11 220.56 L2490.27 220.67 L2490.44 220.77 L2490.64 220.84 L2490.90 220.85 L2491.26 220.76 L2491.80 220.50 L2492.50 220.10 L2493.21 219.73 L2493.79 219.52 L2494.20 219.50 L2494.49 219.59 L2494.71 219.74 L2494.91 219.92 L2495.09 220.11 L2495.25 220.32 L2495.41 220.53 L2495.57 220.74 L2495.72 220.96 L2495.86 221.18 L2496.01 221.40 L2496.14 221.62 L2496.28 221.85 L2496.41 222.08 L2496.53 222.31 L2496.65 222.55 L2496.77 222.78 L2496.88 223.02 L2496.99 223.26 L2497.09 223.50 L2497.18 223.75 L2497.27 224.00 L2497.32 224.26 L2497.34 224.53 L2497.27 224.83 L2497.05 225.17 L2496.58 225.56 L2495.90 226.00 L2495.21 226.41 L2494.72 226.74 L2494.45 227.01 L2494.34 227.24 L2494.30 227.44 L2494.30 227.64 L2494.31 227.84 L2494.33 228.03 L2494.34 228.23 L2494.36 228.42 L2494.37 228.62 L2494.39 228.81 L2494.39 229.01 L2494.40 229.20Z" fill="none" stroke="#262626" stroke-width="2.90" stroke-linejoin="round"/><circle cx="2483.20" cy="229.40" r="4.90" fill="none" stroke="#262626" stroke-width="2.90"/></svg>
<div class="r" style="left:0;top:265.5px;width:2560px;height:767.5px;overflow:hidden">
<div class="r" style="left:0;top:-265.5px;width:2560px;height:1440px">
<div class="t" style="left:154.22px;top:288.01px;font-size:25.50px;color:#262626">1</div>
<div class="t" style="left:230.30px;top:288.42px;font-size:25.01px;color:#262626">Sales per Order</div>
<svg class="s" style="left:0;top:0;width:2560px;height:1440px" viewBox="0 0 2560 1440"><g transform="translate(0 0.00)" fill="none" stroke="#262626" stroke-width="2.8" stroke-linecap="round" stroke-linejoin="round"><path d="M724.1 289.1Q722.6 287.3 720.6 287.4Q717.5 287.8 716.9 294L715.6 311.2Q714.9 314.6 712 314.2L710.2 313.4"/><path d="M712.5 297H722.5"/><path d="M728.1 294Q725.6 298 725.6 302.6Q725.6 307.2 728.1 311.2"/><path d="M733.1 298.8L739.4 306.6M739.4 298.8L733.1 306.6"/><path d="M744.4 294Q746.2 298 746.2 302.6Q746.2 307.2 744.4 311.2"/></g></svg>
<svg class="s" style="left:0;top:0;width:2560px;height:1440px" viewBox="0 0 2560 1440"><path d="M1457.8 292.00L1454.2 311.70M1466.4 292.00L1462.9 311.70M1451.1 298.00H1471M1449.6 305.90H1469.3" fill="none" stroke="#8c8c8c" stroke-width="2.6" stroke-linecap="round"/></svg>
<div class="t" style="left:1484.30px;top:287.30px;font-size:26.34px;color:#262626">Дробное число</div>
<div class="r" style="left:1833.60px;top:273.80px;width:301.00px;height:55.50px;background:#e5ebff;border-radius:10.50px;"></div>
<div class="t" style="left:1855.00px;top:287.46px;font-size:26.15px;color:#262626">Авто</div>
<div class="r" style="left:112.00px;top:337.50px;width:2414.00px;height:72.00px;background:#e5ebff;border-radius:0.00px;"></div>
<div class="r" style="left:145.70px;top:355.05px;width:33.40px;height:33.60px;background:#5282ff;border-radius:8.00px;"></div>
<svg class="s" style="left:0;top:0;width:2560px;height:1440px" viewBox="0 0 2560 1440"><path d="M153.10 371.40L159.40 378.00L170.70 366.40" fill="none" stroke="#fff" stroke-width="3.7" stroke-linecap="butt" stroke-linejoin="miter"/></svg>
<div class="t" style="left:230.30px;top:359.76px;font-size:25.79px;color:#262626">OrderID</div>
<div class="t" style="left:702.00px;top:360.62px;font-size:24.78px;color:#262626">MS_SalesFacts.OrderID</div>
<svg class="s" style="left:1448.65px;top:362.35px;width:23.50px;height:23.50px;" viewBox="0 0 16 16"><g fill="none" stroke="#8c8c8c" stroke-width="1.45" stroke-linecap="round" stroke-linejoin="round"><rect x="1.3" y="1.3" width="13.4" height="13.4" rx="2.6"/><path d="M5.3 5.2h5.4M8 5.2v5.8"/></g></svg>
<div class="t" style="left:1484.30px;top:359.78px;font-size:25.77px;color:#262626">Строка</div>
<div class="r" style="left:1833.60px;top:345.80px;width:301.00px;height:55.50px;background:#cbe6e1;border-radius:10.50px;"></div>
<div class="t" style="left:1855.00px;top:360.49px;font-size:24.93px;color:#262626">Нет</div>
<div class="r" style="left:112.00px;top:409.50px;width:2414.00px;height:72.00px;background:#e5ebff;border-radius:0.00px;"></div>
<div class="r" style="left:145.70px;top:427.05px;width:33.40px;height:33.60px;background:#5282ff;border-radius:8.00px;"></div>
<svg class="s" style="left:0;top:0;width:2560px;height:1440px" viewBox="0 0 2560 1440"><path d="M153.10 443.40L159.40 450.00L170.70 438.40" fill="none" stroke="#fff" stroke-width="3.7" stroke-linecap="butt" stroke-linejoin="miter"/></svg>
<div class="t" style="left:230.30px;top:431.76px;font-size:25.79px;color:#262626">ClientID</div>
<div class="t" style="left:702.00px;top:432.65px;font-size:24.73px;color:#262626">MS_SalesFacts.ClientID</div>
<svg class="s" style="left:1448.65px;top:434.35px;width:23.50px;height:23.50px;" viewBox="0 0 16 16"><g fill="none" stroke="#8c8c8c" stroke-width="1.45" stroke-linecap="round" stroke-linejoin="round"><rect x="1.3" y="1.3" width="13.4" height="13.4" rx="2.6"/><path d="M5.3 5.2h5.4M8 5.2v5.8"/></g></svg>
<div class="t" style="left:1484.30px;top:431.78px;font-size:25.77px;color:#262626">Строка</div>
<div class="r" style="left:1833.60px;top:417.80px;width:301.00px;height:55.50px;background:#cbe6e1;border-radius:10.50px;"></div>
<div class="t" style="left:1855.00px;top:432.49px;font-size:24.93px;color:#262626">Нет</div>
<div class="t" style="left:154.22px;top:504.01px;font-size:25.50px;color:#262626">4</div>
<div class="t" style="left:230.30px;top:503.28px;font-size:26.35px;color:#262626">OrderCount</div>
<div class="t" style="left:702.00px;top:504.65px;font-size:24.73px;color:#262626">MS_SalesFacts.ClientID</div>
<svg class="s" style="left:1448.65px;top:506.35px;width:23.50px;height:23.50px;" viewBox="0 0 16 16"><g fill="none" stroke="#8c8c8c" stroke-width="1.45" stroke-linecap="round" stroke-linejoin="round"><rect x="1.3" y="1.3" width="13.4" height="13.4" rx="2.6"/><path d="M5.3 5.2h5.4M8 5.2v5.8"/></g></svg>
<div class="t" style="left:1484.30px;top:503.78px;font-size:25.77px;color:#262626">Строка</div>
<div class="r" style="left:1833.60px;top:489.80px;width:301.00px;height:55.50px;background:#e5ebff;border-radius:10.50px;"></div>
<div class="t" style="left:1855.00px;top:503.70px;font-size:25.86px;color:#262626">Количество уникал...</div>
<div class="r" style="left:112.00px;top:553.50px;width:2414.00px;height:72.00px;background:#e5ebff;border-radius:0.00px;"></div>
<div class="r" style="left:145.70px;top:571.05px;width:33.40px;height:33.60px;background:#5282ff;border-radius:8.00px;"></div>
<svg class="s" style="left:0;top:0;width:2560px;height:1440px" viewBox="0 0 2560 1440"><path d="M153.10 587.40L159.40 594.00L170.70 582.40" fill="none" stroke="#fff" stroke-width="3.7" stroke-linecap="butt" stroke-linejoin="miter"/></svg>
<div class="t" style="left:230.30px;top:575.51px;font-size:26.09px;color:#262626">ProductID</div>
<div class="t" style="left:702.00px;top:576.40px;font-size:25.03px;color:#262626">MS_SalesFacts.ProductID</div>
<svg class="s" style="left:1448.65px;top:578.35px;width:23.50px;height:23.50px;" viewBox="0 0 16 16"><g fill="none" stroke="#8c8c8c" stroke-width="1.45" stroke-linecap="round" stroke-linejoin="round"><rect x="1.3" y="1.3" width="13.4" height="13.4" rx="2.6"/><path d="M5.3 5.2h5.4M8 5.2v5.8"/></g></svg>
<div class="t" style="left:1484.30px;top:575.78px;font-size:25.77px;color:#262626">Строка</div>
<div class="r" style="left:1833.60px;top:561.80px;width:301.00px;height:55.50px;background:#cbe6e1;border-radius:10.50px;"></div>
<div class="t" style="left:1855.00px;top:576.49px;font-size:24.93px;color:#262626">Нет</div>
<div class="t" style="left:154.22px;top:648.01px;font-size:25.50px;color:#262626">6</div>
<div class="t" style="left:230.30px;top:648.22px;font-size:25.25px;color:#262626">ShopID</div>
<div class="t" style="left:702.00px;top:648.66px;font-size:24.73px;color:#262626">MS_SalesFacts.ShopID</div>
<svg class="s" style="left:1448.65px;top:650.35px;width:23.50px;height:23.50px;" viewBox="0 0 16 16"><g fill="none" stroke="#8c8c8c" stroke-width="1.45" stroke-linecap="round" stroke-linejoin="round"><rect x="1.3" y="1.3" width="13.4" height="13.4" rx="2.6"/><path d="M5.3 5.2h5.4M8 5.2v5.8"/></g></svg>
<div class="t" style="left:1484.30px;top:647.78px;font-size:25.77px;color:#262626">Строка</div>
<div class="r" style="left:1833.60px;top:633.80px;width:301.00px;height:55.50px;background:#e1f6e2;border-radius:10.50px;"></div>
<div class="t" style="left:1855.00px;top:648.49px;font-size:24.93px;color:#262626">Нет</div>
<div class="t" style="left:154.22px;top:720.01px;font-size:25.50px;color:#262626">7</div>
<div class="t" style="left:230.30px;top:719.10px;font-size:26.57px;color:#262626">OrderDatetime</div>
<div class="t" style="left:702.00px;top:720.15px;font-size:25.33px;color:#262626">MS_SalesFacts.OrderDatetime</div>
<svg class="s" style="left:1448.25px;top:721.35px;width:24.50px;height:24.50px;" viewBox="0 0 16 16"><g fill="none" stroke="#8c8c8c" stroke-width="1.45" stroke-linecap="round" stroke-linejoin="round"><rect x="1.3" y="2.4" width="13.4" height="12.3" rx="2.8"/><path d="M1.3 6.5h13.4M5 1.1v2.6M11 1.1v2.6"/></g></svg>
<div class="t" style="left:1484.30px;top:719.82px;font-size:25.72px;color:#262626">Дата и время</div>
<div class="r" style="left:1833.60px;top:705.80px;width:301.00px;height:55.50px;background:#e1f6e2;border-radius:10.50px;"></div>
<div class="t" style="left:1855.00px;top:720.49px;font-size:24.93px;color:#262626">Нет</div>
<div class="t" style="left:154.22px;top:792.01px;font-size:25.50px;color:#262626">8</div>
<div class="t" style="left:230.30px;top:791.59px;font-size:26.00px;color:#262626">OrderDate</div>
<div class="t" style="left:702.00px;top:792.15px;font-size:25.33px;color:#262626">MS_SalesFacts.OrderDatetime</div>
<svg class="s" style="left:1448.25px;top:793.35px;width:24.50px;height:24.50px;" viewBox="0 0 16 16"><g fill="none" stroke="#8c8c8c" stroke-width="1.45" stroke-linecap="round" stroke-linejoin="round"><rect x="1.3" y="2.4" width="13.4" height="12.3" rx="2.8"/><path d="M1.3 6.5h13.4M5 1.1v2.6M11 1.1v2.6"/></g></svg>
<div class="t" style="left:1484.30px;top:791.51px;font-size:26.08px;color:#262626">Дата</div>
<div class="r" style="left:1833.60px;top:777.80px;width:301.00px;height:55.50px;background:#e1f6e2;border-radius:10.50px;"></div>
<div class="t" style="left:1855.00px;top:792.49px;font-size:24.93px;color:#262626">Нет</div>
<div class="t" style="left:154.22px;top:864.01px;font-size:25.50px;color:#262626">9</div>
<div class="t" style="left:230.30px;top:863.32px;font-size:26.32px;color:#262626">DeliveryDatetime</div>
<div class="t" style="left:702.00px;top:864.09px;font-size:25.40px;color:#262626">MS_SalesFacts.DeliveryDatetime</div>
<svg class="s" style="left:1448.25px;top:865.35px;width:24.50px;height:24.50px;" viewBox="0 0 16 16"><g fill="none" stroke="#8c8c8c" stroke-width="1.45" stroke-linecap="round" stroke-linejoin="round"><rect x="1.3" y="2.4" width="13.4" height="12.3" rx="2.8"/><path d="M1.3 6.5h13.4M5 1.1v2.6M11 1.1v2.6"/></g></svg>
<div class="t" style="left:1484.30px;top:863.82px;font-size:25.72px;color:#262626">Дата и время</div>
<div class="r" style="left:1833.60px;top:849.80px;width:301.00px;height:55.50px;background:#e1f6e2;border-radius:10.50px;"></div>
<div class="t" style="left:1855.00px;top:864.49px;font-size:24.93px;color:#262626">Нет</div>
<div class="t" style="left:147.15px;top:936.01px;font-size:25.50px;color:#262626">10</div>
<div class="t" style="left:230.30px;top:936.43px;font-size:25.00px;color:#262626">DeliveryAddress</div>
<div class="t" style="left:702.00px;top:936.43px;font-size:25.00px;color:#262626">MS_SalesFacts.DeliveryAddress</div>
<svg class="s" style="left:1448.65px;top:938.35px;width:23.50px;height:23.50px;" viewBox="0 0 16 16"><g fill="none" stroke="#8c8c8c" stroke-width="1.45" stroke-linecap="round" stroke-linejoin="round"><rect x="1.3" y="1.3" width="13.4" height="13.4" rx="2.6"/><path d="M5.3 5.2h5.4M8 5.2v5.8"/></g></svg>
<div class="t" style="left:1484.30px;top:935.78px;font-size:25.77px;color:#262626">Строка</div>
<div class="r" style="left:1833.60px;top:921.80px;width:301.00px;height:55.50px;background:#e1f6e2;border-radius:10.50px;"></div>
<div class="t" style="left:1855.00px;top:936.49px;font-size:24.93px;color:#262626">Нет</div>
<div class="t" style="left:148.04px;top:1008.01px;font-size:25.50px;color:#262626">11</div>
<div class="t" style="left:230.30px;top:1007.26px;font-size:26.38px;color:#262626">ProductCount</div>
<div class="t" style="left:702.00px;top:1008.12px;font-size:25.37px;color:#262626">MS_SalesFacts.ProductCount</div>
<svg class="s" style="left:0;top:0;width:2560px;height:1440px" viewBox="0 0 2560 1440"><path d="M1457.8 1012.00L1454.2 1031.70M1466.4 1012.00L1462.9 1031.70M1451.1 1018.00H1471M1449.6 1025.90H1469.3" fill="none" stroke="#8c8c8c" stroke-width="2.6" stroke-linecap="round"/></svg>
<div class="t" style="left:1484.30px;top:1007.96px;font-size:25.55px;color:#262626">Целое число</div>
<div class="r" style="left:1833.60px;top:993.80px;width:301.00px;height:55.50px;background:#e1f6e2;border-radius:10.50px;"></div>
<div class="t" style="left:1855.00px;top:1008.49px;font-size:24.93px;color:#262626">Нет</div>
</div></div>
<div class="r" style="left:112.00px;top:1033.00px;width:2445.00px;height:3.00px;background:#e6e6e6;border-radius:0.00px;"></div>
<div class="r" style="left:2526.00px;top:192.30px;width:31.00px;height:840.70px;background:#ffffff;border-radius:0.00px;"></div>
<div class="r" style="left:2529.00px;top:225.00px;width:28.00px;height:254.00px;background:#e0e0e0;border-radius:0.00px;"></div>
<svg class="s" style="left:2535.50px;top:205.50px;width:15.00px;height:8.00px;" viewBox="0 0 15 8"><path d="M0 8L7.5 0L15 8Z" fill="#dcdcdc"/></svg>
<svg class="s" style="left:2535.50px;top:1010.00px;width:15.00px;height:8.00px;" viewBox="0 0 15 8"><path d="M0 0L7.5 8L15 0Z" fill="#dcdcdc"/></svg>
<div class="r" style="left:142.75px;top:901.00px;width:2353.25px;height:103.75px;background:#5282ff;border-radius:20.00px;"></div>
<div class="t" style="left:183.20px;top:937.34px;font-size:29.00px;color:#ffffff;-webkit-text-stroke:0.90px #ffffff">Выбрано полей — 3</div>
<svg class="s" style="left:0;top:0;width:2560px;height:1440px" viewBox="0 0 2560 1440"><g fill="none" stroke="#fff" stroke-width="2.9" stroke-linecap="round" stroke-linejoin="round"><path d="M573.3 943.5H598.1M581.1 943.5V941Q581.1 938.5 583.6 938.5H588.1Q590.6 938.5 590.6 941V943.5M576.4 945L576.9 959.4Q577.2 964.4 582.2 964.4H589.1Q594.1 964.4 594.4 959.4L594.9 945M582.5 948.4V959.5M588.6 948.4V959.5"/></g></svg>
<div class="t" style="left:618.50px;top:940.27px;font-size:25.18px;color:#ffffff">Удалить</div>
<svg class="s" style="left:0;top:0;width:2560px;height:1440px" viewBox="0 0 2560 1440"><path d="M784.31 945.62A14.15 10.40 0 0 0 802.23 961.31M791.49 942.25A14.15 10.40 0 0 1 807.97 956.70M790.02 950.49A5.30 5.30 0 0 0 795.92 957.52M796.81 947.32A5.30 5.30 0 0 1 799.98 950.49M784.00 941.10L806.30 963.60" fill="none" stroke="#ffffff" stroke-width="2.80" stroke-linecap="round"/></svg>
<div class="t" style="left:828.00px;top:939.58px;font-size:26.00px;color:#ffffff">Скрыть</div>
<svg class="s" style="left:0;top:0;width:2560px;height:1440px" viewBox="0 0 2560 1440"><g fill="none" stroke="#fff" stroke-width="2.9" stroke-linecap="round" stroke-linejoin="round" transform="translate(0 0)"><path d="M986.2 962.8L987.4 956.6Q988 954 990 952L1002.5 939.5Q1005.2 936.8 1008 939.5L1009.5 941Q1012.2 943.7 1009.5 946.4L997 958.9Q995 960.9 992.4 961.5Z"/><path d="M1000.6 941.4L1007.6 948.4"/></g></svg>
<div class="t" style="left:1030.30px;top:939.27px;font-size:26.37px;color:#ffffff">Изменить тип</div>
<svg class="s" style="left:0;top:0;width:2560px;height:1440px" viewBox="0 0 2560 1440"><g fill="none" stroke="#fff" stroke-width="2.9" stroke-linecap="round" stroke-linejoin="round" transform="translate(281.9 0)"><path d="M986.2 962.8L987.4 956.6Q988 954 990 952L1002.5 939.5Q1005.2 936.8 1008 939.5L1009.5 941Q1012.2 943.7 1009.5 946.4L997 958.9Q995 960.9 992.4 961.5Z"/><path d="M1000.6 941.4L1007.6 948.4"/></g></svg>
<div class="t" style="left:1311.30px;top:939.09px;font-size:26.58px;color:#ffffff">Изменить агрегацию</div>
<svg class="s" style="left:2417.50px;top:941.00px;width:22.00px;height:22.00px;" viewBox="0 0 16 16"><path d="M1.5 1.5l13 13M14.5 1.5l-13 13" fill="none" stroke="#fff" stroke-width="2" stroke-linecap="round"/></svg>
<div class="r" style="left:112.00px;top:1036.00px;width:2445.00px;height:401.00px;background:#f9f9f9;border-radius:0.00px;"></div>
<div class="t" style="left:153.30px;top:1067.88px;font-size:27.54px;color:#262626;-webkit-text-stroke:0.80px #262626">Предпросмотр</div>
<div class="t" style="left:422.00px;top:1068.99px;font-size:26.22px;color:#262626">Количество строк:</div>
<div class="r" style="left:664.30px;top:1056.70px;width:164.00px;height:54.50px;background:transparent;border-radius:11.00px;border:2px solid #e0e0e0"></div>
<div class="t" style="left:682.90px;top:1070.74px;font-size:25.70px;color:#262626">10</div>
<div class="t" style="left:848.70px;top:1070.24px;font-size:24.76px;color:#808080">не больше 1 000</div>
<svg class="s" style="left:0;top:0;width:2560px;height:1440px" viewBox="0 0 2560 1440"><g fill="none" stroke="#262626" stroke-width="2.9" stroke-linecap="round" stroke-linejoin="round"><path d="M2359.3 1074.3H2370.5V1085.6M2349.6 1084.3V1095.2H2360.6"/><rect x="2413.1" y="1074.4" width="25" height="21" rx="5"/><path d="M2430.6 1074.4V1095.4"/><path d="M2484.4 1076.3L2501.2 1093.6M2501.2 1076.3L2484.4 1093.6"/></g></svg>
<div class="r" style="left:136.00px;top:1133.00px;width:2390.00px;height:1.50px;background:#e3e3e3;border-radius:0.00px;"></div>
<div class="r" style="left:136.00px;top:1199.00px;width:2390.00px;height:1.50px;background:#e3e3e3;border-radius:0.00px;"></div>
<div class="r" style="left:136.00px;top:1263.00px;width:2390.00px;height:1.50px;background:#e3e3e3;border-radius:0.00px;"></div>
<div class="r" style="left:136.00px;top:1327.00px;width:2390.00px;height:1.50px;background:#e3e3e3;border-radius:0.00px;"></div>
<div class="r" style="left:136.00px;top:1391.00px;width:2390.00px;height:1.50px;background:#e3e3e3;border-radius:0.00px;"></div>
<div class="r" style="left:0;top:0;width:2526px;height:1405px;overflow:hidden">
<div class="t" style="left:224.70px;top:1151.24px;font-size:25.69px;color:#262626;-webkit-text-stroke:0.45px #262626">Sales per Order</div>
<div class="t" style="left:447.50px;top:1150.54px;font-size:26.53px;color:#262626;-webkit-text-stroke:0.45px #262626">OrderID</div>
<div class="t" style="left:640.40px;top:1150.73px;font-size:26.30px;color:#262626;-webkit-text-stroke:0.45px #262626">ClientID</div>
<div class="t" style="left:775.30px;top:1150.23px;font-size:26.89px;color:#262626;-webkit-text-stroke:0.45px #262626">OrderCount</div>
<div class="t" style="left:958.00px;top:1150.37px;font-size:26.73px;color:#262626;-webkit-text-stroke:0.45px #262626">ProductID</div>
<div class="t" style="left:1118.40px;top:1151.27px;font-size:25.67px;color:#262626;-webkit-text-stroke:0.45px #262626">ShopID</div>
<div class="t" style="left:1246.40px;top:1150.02px;font-size:27.13px;color:#262626;-webkit-text-stroke:0.45px #262626">OrderDatetime</div>
<div class="t" style="left:1536.10px;top:1150.39px;font-size:26.70px;color:#262626;-webkit-text-stroke:0.45px #262626">OrderDate</div>
<div class="t" style="left:1709.30px;top:1150.09px;font-size:27.05px;color:#262626;-webkit-text-stroke:0.45px #262626">DeliveryDatetime</div>
<div class="t" style="left:1999.80px;top:1150.56px;font-size:26.50px;color:#262626;-webkit-text-stroke:0.45px #262626">Discount</div>
<div class="t" style="left:2145.10px;top:1150.12px;font-size:27.02px;color:#262626;-webkit-text-stroke:0.45px #262626">ProductCount</div>
<div class="t" style="left:2352.50px;top:1150.56px;font-size:26.50px;color:#262626;-webkit-text-stroke:0.45px #262626">DeliveryAddress</div>
<svg class="s" style="left:0;top:0;width:2560px;height:1440px" viewBox="0 0 2560 1440"><path d="M167 1156.5L163.2 1176.3M175.2 1156.5L171.4 1176.3M158.6 1162.5H178.6M157.2 1170.1H177.2" fill="none" stroke="#262626" stroke-width="3" stroke-linecap="round"/></svg>
<div class="t" style="left:156.50px;top:1217.59px;font-size:25.75px;color:#262626">1</div>
<div class="t" style="left:224.70px;top:1217.59px;font-size:25.75px;color:#262626">1082.0</div>
<div class="t" style="left:447.50px;top:1217.59px;font-size:25.75px;color:#262626">2019-163809</div>
<div class="t" style="left:640.40px;top:1217.59px;font-size:25.75px;color:#262626">oa0kR</div>
<div class="t" style="left:775.30px;top:1217.59px;font-size:25.75px;color:#262626">1</div>
<div class="t" style="left:958.00px;top:1217.59px;font-size:25.75px;color:#262626">prd-34</div>
<div class="t" style="left:1118.40px;top:1217.59px;font-size:25.75px;color:#262626">sp-18</div>
<div class="t" style="left:1246.40px;top:1217.59px;font-size:25.75px;color:#262626">2019-02-05T12:04:00</div>
<div class="t" style="left:1536.10px;top:1217.59px;font-size:25.75px;color:#262626">2019-02-05</div>
<div class="t" style="left:1709.30px;top:1217.59px;font-size:25.75px;color:#262626">1970-01-01T00:00:00</div>
<div class="t" style="left:1999.80px;top:1217.59px;font-size:25.75px;color:#262626">0.0</div>
<div class="t" style="left:2145.10px;top:1217.59px;font-size:25.75px;color:#262626">5</div>
<div class="t" style="left:2352.50px;top:1217.59px;font-size:25.75px;color:#262626">[55.71177255,37.6</div>
<div class="t" style="left:156.50px;top:1281.59px;font-size:25.75px;color:#262626">2</div>
<div class="t" style="left:224.70px;top:1281.59px;font-size:25.75px;color:#262626">151.0</div>
<div class="t" style="left:447.50px;top:1281.59px;font-size:25.75px;color:#262626">2019-153819</div>
<div class="t" style="left:640.40px;top:1281.59px;font-size:25.75px;color:#262626">lE020</div>
<div class="t" style="left:775.30px;top:1281.59px;font-size:25.75px;color:#262626">1</div>
<div class="t" style="left:958.00px;top:1281.59px;font-size:25.75px;color:#262626">prd-15</div>
<div class="t" style="left:1118.40px;top:1281.59px;font-size:25.75px;color:#262626">sp-19</div>
<div class="t" style="left:1246.40px;top:1281.59px;font-size:25.75px;color:#262626">2019-01-24T11:46:00</div>
<div class="t" style="left:1536.10px;top:1281.59px;font-size:25.75px;color:#262626">2019-01-24</div>
<div class="t" style="left:1709.30px;top:1281.59px;font-size:25.75px;color:#262626">2019-02-01T05:34:00</div>
<div class="t" style="left:1999.80px;top:1281.59px;font-size:25.75px;color:#262626">0.0</div>
<div class="t" style="left:2145.10px;top:1281.59px;font-size:25.75px;color:#262626">3</div>
<div class="t" style="left:2352.50px;top:1281.59px;font-size:25.75px;color:#262626">[55.848460103,37</div>
<div class="t" style="left:156.50px;top:1345.59px;font-size:25.75px;color:#262626">3</div>
<div class="t" style="left:224.70px;top:1345.59px;font-size:25.75px;color:#262626">463.0</div>
<div class="t" style="left:447.50px;top:1345.59px;font-size:25.75px;color:#262626">2018-399355</div>
<div class="t" style="left:640.40px;top:1345.59px;font-size:25.75px;color:#262626">NwO2N</div>
<div class="t" style="left:775.30px;top:1345.59px;font-size:25.75px;color:#262626">1</div>
<div class="t" style="left:958.00px;top:1345.59px;font-size:25.75px;color:#262626">prd-19</div>
<div class="t" style="left:1118.40px;top:1345.59px;font-size:25.75px;color:#262626">sp-17</div>
<div class="t" style="left:1246.40px;top:1345.59px;font-size:25.75px;color:#262626">2018-11-30T13:52:00</div>
<div class="t" style="left:1536.10px;top:1345.59px;font-size:25.75px;color:#262626">2018-11-30</div>
<div class="t" style="left:1709.30px;top:1345.59px;font-size:25.75px;color:#262626">1970-01-01T00:00:00</div>
<div class="t" style="left:1999.80px;top:1345.59px;font-size:25.75px;color:#262626">0.0</div>
<div class="t" style="left:2145.10px;top:1345.59px;font-size:25.75px;color:#262626">4</div>
<div class="t" style="left:2352.50px;top:1345.59px;font-size:25.75px;color:#262626">[55.637970844,37</div>
</div>
<div class="r" style="left:2526.00px;top:1134.00px;width:31.00px;height:271.60px;background:#ffffff;border-radius:0.00px;"></div>
<div class="r" style="left:2529.50px;top:1166.30px;width:27.50px;height:80.20px;background:#e0e0e0;border-radius:0.00px;"></div>
<svg class="s" style="left:2535.50px;top:1147.00px;width:15.00px;height:8.00px;" viewBox="0 0 15 8"><path d="M0 8L7.5 0L15 8Z" fill="#dcdcdc"/></svg>
<svg class="s" style="left:2535.50px;top:1384.00px;width:15.00px;height:8.00px;" viewBox="0 0 15 8"><path d="M0 0L7.5 8L15 0Z" fill="#dcdcdc"/></svg>
<div class="r" style="left:136.00px;top:1405.60px;width:2421.00px;height:31.40px;background:#ffffff;border-radius:0.00px;"></div>
<div class="r" style="left:169.00px;top:1409.00px;width:43.00px;height:28.00px;background:#e0e0e0;border-radius:0.00px;"></div>
<svg class="s" style="left:148.50px;top:1416.00px;width:8.00px;height:15.00px;" viewBox="0 0 8 15"><path d="M8 0L0 7.5L8 15Z" fill="#dcdcdc"/></svg>
<svg class="s" style="left:2505.50px;top:1416.00px;width:8.00px;height:15.00px;" viewBox="0 0 8 15"><path d="M0 0L8 7.5L0 15Z" fill="#dcdcdc"/></svg>
<div class="r" style="left:0;top:0;width:2560px;height:3px;background:#c8c8c8"></div>
<div class="r" style="left:0;top:1437px;width:2560px;height:3px;background:#c8c8c8"></div>
<div class="r" style="left:0;top:0;width:3px;height:1440px;background:#c8c8c8"></div>
<div class="r" style="left:2557px;top:0;width:3px;height:1440px;background:#c8c8c8"></div>
</body></html>
